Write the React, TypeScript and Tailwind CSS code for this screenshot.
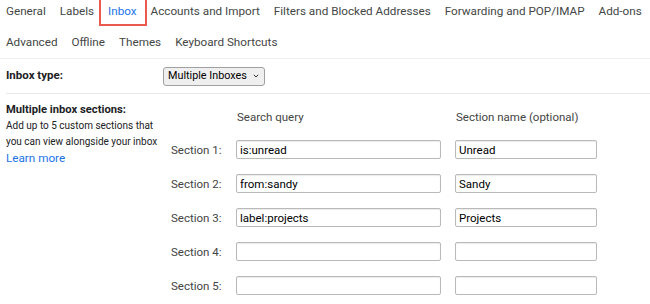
const tabsRow1 = ['General', 'Labels', 'Inbox', 'Accounts and Import', 'Filters and Blocked Addresses', 'Forwarding and POP/IMAP', 'Add-ons']
const tabsRow2 = ['Advanced', 'Offline', 'Themes', 'Keyboard Shortcuts']

const sections = [
  { query: 'is:unread', name: 'Unread' },
  { query: 'from:sandy', name: 'Sandy' },
  { query: 'label:projects', name: 'Projects' },
  { query: '', name: '' },
  { query: '', name: '' },
]

function Tab({ label }: { label: string }) {
  if (label === 'Inbox') {
    return (
      <div className="relative whitespace-nowrap text-[#1a73e8]">
        {label}
        {/* annotation box */}
        <span className="absolute left-[-9px] right-[-10px] top-[-11px] bottom-[-5px] border-2 border-[#ea5a4d]"></span>
      </div>
    )
  }
  return <div className="whitespace-nowrap">{label}</div>
}

export default function App() {
  return (
    <div className="w-[650px] h-[304px] overflow-hidden bg-white text-[#202124] font-['Roboto',sans-serif] text-[11.5px]">
      {/* Tabs */}
      <div className="border-b border-[#eeeeee] pb-[3px] text-[11.7px] text-[#444746]">
        <div className="flex h-6 items-center gap-[14px] pl-[6px]">
          {tabsRow1.map((t) => (
            <Tab key={t} label={t} />
          ))}
        </div>
        <div className="mt-[7px] flex h-6 items-center gap-[14px] pl-[6px]">
          {tabsRow2.map((t) => (
            <Tab key={t} label={t} />
          ))}
        </div>
      </div>

      {/* Inbox type */}
      <div className="ml-[6px] flex h-[35px] items-center border-b border-[#e8e8e8]">
        <div className="w-[157px] font-bold">Inbox type:</div>
        <div className="flex h-[19px] w-[102px] items-center gap-[6px] whitespace-nowrap rounded-[3px] border border-[#a0a0a0] bg-[#efefef] pl-[4px] text-[10.8px] text-black">
          <span>Multiple Inboxes</span>
          <svg className="shrink-0" width="6" height="4" viewBox="0 0 6 4" fill="none">
            <path d="M0.8 0.8l2.2 2.2L5.2 0.8" stroke="#333" strokeWidth="1" />
          </svg>
        </div>
      </div>

      {/* Sections */}
      <div className="flex pl-[6px] pt-[8px]">
        <div className="w-[165px] whitespace-nowrap leading-[16px]">
          <div className="font-bold text-[11.2px]">Multiple inbox sections:</div>
          <div className="text-[10px]">Add up to 5 custom sections that</div>
          <div className="text-[10px]">you can view alongside your inbox</div>
          <div className="text-[11.7px] text-[#1a73e8]">Learn more</div>
        </div>
        <div className="mt-[7px] grid grid-cols-[65px_205px_14px_142px] gap-y-[15px] leading-[16px]">
          <div></div>
          <div className="pl-[1px] text-[#444]">Search query</div>
          <div></div>
          <div className="pl-[1px] text-[#444]">Section name (optional)</div>
          {sections.map((s, i) => (
            <div key={i} className="contents">
              <div className="flex h-[19px] items-center whitespace-nowrap text-[#444]">Section {i + 1}:</div>
              <div className="flex h-[19px] items-center rounded-[2px] border border-[#b9b9b9] px-[3px] text-black shadow-[inset_0_1px_1px_rgba(0,0,0,0.08)]">
                {s.query}
              </div>
              <div></div>
              <div className="flex h-[19px] items-center rounded-[2px] border border-[#b9b9b9] px-[3px] text-black shadow-[inset_0_1px_1px_rgba(0,0,0,0.08)]">
                {s.name}
              </div>
            </div>
          ))}
        </div>
      </div>
    </div>
  )
}
